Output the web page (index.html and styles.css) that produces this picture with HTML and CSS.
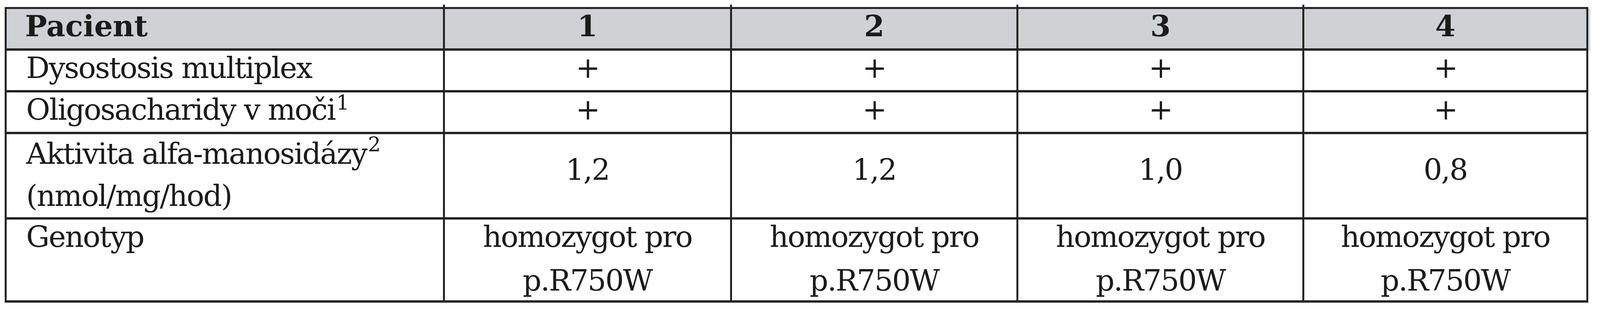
FILE: index.html
```html
<!DOCTYPE html>
<html lang="cs">
<head>
<meta charset="utf-8">
<title>Pacient</title>
<link rel="stylesheet" href="styles.css">
</head>
<body>
<table class="tbl">
  <thead>
    <tr>
      <th class="lab w0">Pacient</th>
      <th class="val w1">1</th>
      <th class="val w2">2</th>
      <th class="val w3">3</th>
      <th class="val w4">4</th>
    </tr>
  </thead>
  <tbody>
    <tr>
      <td class="lab">Dysostosis multiplex</td>
      <td class="val">+</td>
      <td class="val">+</td>
      <td class="val">+</td>
      <td class="val">+</td>
    </tr>
    <tr>
      <td class="lab">Oligosacharidy v moči<sup class="s1">1</sup></td>
      <td class="val">+</td>
      <td class="val">+</td>
      <td class="val">+</td>
      <td class="val">+</td>
    </tr>
    <tr class="r3">
      <td class="lab"><span class="ln">Aktivita alfa-manosidázy<sup class="s2">2</sup></span><span class="ln ln2">(nmol/mg/hod)</span></td>
      <td class="val">1,2</td>
      <td class="val">1,2</td>
      <td class="val">1,0</td>
      <td class="val">0,8</td>
    </tr>
    <tr class="r4">
      <td class="lab"><span class="ln">Genotyp</span></td>
      <td class="val"><span class="ln">homozygot pro</span><span class="ln ln2">p.R750W</span></td>
      <td class="val"><span class="ln">homozygot pro</span><span class="ln ln2">p.R750W</span></td>
      <td class="val"><span class="ln">homozygot pro</span><span class="ln ln2">p.R750W</span></td>
      <td class="val"><span class="ln">homozygot pro</span><span class="ln ln2">p.R750W</span></td>
    </tr>
  </tbody>
</table>
</body>
</html>
```

FILE: styles.css
```css
html, body {
  margin: 0;
  padding: 0;
  background: #ffffff;
}

.tbl {
  box-sizing: border-box;
  width: calc(100% - 42px);
  margin: 18px 0 0 12px;
  border-collapse: separate;
  border-spacing: 0;
  table-layout: fixed;
  border-top: 5px solid #232323;
  border-left: 5px solid #232323;
  font-family: "DejaVu Serif", serif;
  font-size: 75px;
  line-height: 89px;
  letter-spacing: -2.5px;
  color: #1b1b1b;
}

.tbl th,
.tbl td {
  box-sizing: border-box;
  position: relative;
  padding: 0 0 12px 0;
  border-right: 5px solid #232323;
  border-bottom: 6px solid #232323;
  vertical-align: top;
  text-align: center;
  white-space: nowrap;
}

.tbl th {
  background: #d0d1d5;
  font-weight: bold;
  letter-spacing: 0;
}

.tbl .lab {
  text-align: left;
  padding-left: 50px;
}

.tbl th.lab {
  padding-left: 47px;
}

.w0 { width: 27.68%; }
.w1 { width: 18.12%; }
.w2 { width: 18.10%; }
.w3 { width: 18.05%; }
.w4 { width: 17.93%; box-shadow: 6px 0 0 #dcdde0; }

/* short ends of the inner rules that run past the outer frame */
.tbl th.val::before {
  content: "";
  position: absolute;
  left: -5px;
  top: -11px;
  width: 5px;
  height: 11px;
  background: #232323;
}

.tbl .r4 td.val::after {
  content: "";
  position: absolute;
  left: -5px;
  bottom: -12px;
  width: 5px;
  height: 6px;
  background: #232323;
}

.ln {
  display: block;
}

.r3 .lab {
  padding-top: 6px;
  padding-bottom: 10px;
}

.r3 .val {
  padding-top: 47px;
}

.r3 .ln2 {
  margin-top: 19px;
}

.r4 td {
  padding-bottom: 6px;
}

.r4 .ln2 {
  margin-top: 23px;
}

sup {
  font-size: 52px;
  line-height: 0;
  letter-spacing: 0;
}

.s1 {
  vertical-align: 26px;
  margin-left: 3px;
}

.s2 {
  vertical-align: 32px;
  margin-left: 3px;
}
```
